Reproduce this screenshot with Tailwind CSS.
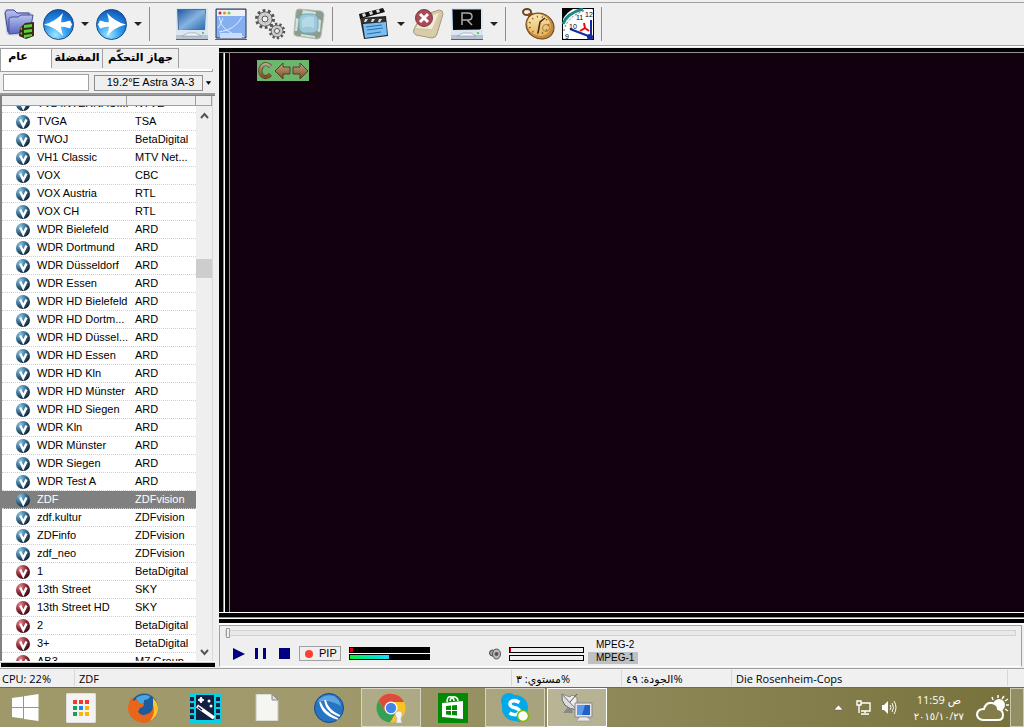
<!DOCTYPE html>
<html lang="ar">

<head>
    <meta charset="UTF-8" />
    <meta name="viewport" content="width=device-width, initial-scale=1.0" />
    <title>ZDF</title>
    <script src="https://cdn.jsdelivr.net/npm/@tailwindcss/browser@4"></script>
</head>

<body class="h-screen flex flex-col overflow-hidden bg-[#efefef] text-black font-['Liberation_Sans','DejaVu_Sans',sans-serif]">
    <!-- shared gradients and symbols -->
    <svg class="absolute w-0 h-0" aria-hidden="true">
        <defs>
            <radialGradient id="ball" cx=".4" cy=".85" r=".9"><stop offset="0" stop-color="#9fe6ff" /><stop offset=".45" stop-color="#2f9cf0" /><stop offset="1" stop-color="#0b4fae" /></radialGradient>
            <linearGradient id="folder" x2="0" y2="1"><stop offset="0" stop-color="#b9c2ee" /><stop offset="1" stop-color="#5a67c4" /></linearGradient>
            <linearGradient id="screen" x2="1" y2="1"><stop offset="0" stop-color="#2459a0" /><stop offset=".5" stop-color="#86b4e0" /><stop offset="1" stop-color="#2a68b0" /></linearGradient>
            <linearGradient id="gold" x2="1" y2="1"><stop offset="0" stop-color="#fff2c0" /><stop offset="1" stop-color="#e2a94c" /></linearGradient>
            <linearGradient id="bronze" x2="0" y2="1"><stop offset="0" stop-color="#b5a58c" /><stop offset="1" stop-color="#8b4a1c" /></linearGradient>
            <radialGradient id="vblue" cx=".3" cy=".25" r=".8"><stop offset="0" stop-color="#8cc4e0" /><stop offset=".5" stop-color="#3a7498" /><stop offset="1" stop-color="#0c1f30" /></radialGradient>
            <radialGradient id="vred" cx=".3" cy=".25" r=".8"><stop offset="0" stop-color="#e08a90" /><stop offset=".5" stop-color="#98303c" /><stop offset="1" stop-color="#2c0a10" /></radialGradient>
            <symbol id="chan-blue" viewBox="0 0 14 14"><circle cx="7" cy="7" r="7" fill="url(#vblue)" /><path d="M4.200 4.500 7.300 11 10.500 4.500" fill="none" stroke="#fff" stroke-width="2.400" /></symbol>
            <symbol id="chan-red" viewBox="0 0 14 14"><circle cx="7" cy="7" r="7" fill="url(#vred)" /><path d="M4.200 4.500 7.300 11 10.500 4.500" fill="none" stroke="#fff" stroke-width="2.400" /></symbol>
            <symbol id="monitor" viewBox="0 0 32 32">
                <path d="M0 25h32v6H0z" fill="#b9c3cf" /><path d="M0 31h32v1H0z" fill="#a03880" />
                <path d="M0 0h32v27H0z" fill="#dce6f0" /><path d="M1 1h29l-1 21H2z" fill="#4d6f96" />
                <path d="M2 2h27v19L3 22z" fill="url(#screen)" />
                <path d="m12 25 8 0 5 3H6z" fill="#f4f7fa" stroke="#8294a8" stroke-width=".6" /><circle cx="27" cy="25" r="1" fill="#35c040" />
            </symbol>
        </defs>
    </svg>

    <header class="shrink-0 pt-[2px] border-b border-white">
        <nav class="flex items-center h-[44px] pl-[3px] gap-[7px] border-y border-[#a0a0a0]">
            <button aria-label="Open list">
                <svg class="w-[33px] h-8" viewBox="0 0 33 32">
                    <path d="M1 3q1-3 4-2l6 1 2 2h13q3 0 3 3l1 17q-13 5-24 3-3 0-3-4z" fill="#cfcfd8" />
                    <path d="m2 5 2-3h7l3 3h12v19H5z" fill="url(#folder)" stroke="#3c4694" />
                    <path d="M6 11q0-2 3-2h6l3-2h12l-3 17-21 2z" fill="url(#folder)" stroke="#4450a4" />
                    <path d="m17 20 5-5 9-1v14l-8 3-7-3z" fill="#3a2b14" />
                    <path d="m21 17 8-1v3l-8 1zm0 5 8-1v3l-8 1zm0 5 8-1v2l-8 2z" fill="#58d040" />
                    <path d="m17 21 2-2v3zm0 4 2-1v3z" fill="#e0a030" />
                </svg>
            </button>
            <button aria-label="Back">
                <svg class="w-[31px] h-[31px]" viewBox="0 0 31 31">
                    <circle cx="15.500" cy="15.500" r="15" fill="url(#ball)" stroke="#174c8c" />
                    <path d="M1 15.500Q12 13 20 4q-4 11.500 0 23Q12 18 1 15.500z" fill="#fff" />
                    <path d="M16 13.500q6 0 11-2l2 4-2 4q-5-2-11-2z" fill="#fff" />
                </svg>
            </button>
            <button aria-label="Back history"><svg class="w-2 h-2" viewBox="0 0 8 8"><path d="M0 2h8L4 6z" fill="#222" /></svg></button>
            <button aria-label="Forward">
                <svg class="w-[31px] h-[31px]" viewBox="0 0 31 31">
                    <circle cx="15.500" cy="15.500" r="15" fill="url(#ball)" stroke="#174c8c" />
                    <path d="M30 15.500Q19 13 11 4q4 11.500 0 23 8-9 19-11.500z" fill="#fff" />
                    <path d="M15 13.500q-6 0-11-2l-2 4 2 4q5-2 11-2z" fill="#fff" />
                </svg>
            </button>
            <button aria-label="Forward history"><svg class="w-2 h-2" viewBox="0 0 8 8"><path d="M0 2h8L4 6z" fill="#222" /></svg></button>
            <span class="w-px h-[34px] bg-[#8c8c8c]"></span>
            <button class="ml-[19px]" aria-label="Display"><svg class="w-8 h-8"><use href="#monitor" /></svg></button>
            <button aria-label="Window">
                <svg class="w-8 h-8" viewBox="0 0 32 32">
                    <path d="M0 31h32v1H0z" fill="#a03880" /><path d="M1 1h30v29H1z" fill="#86aff0" stroke="#23355f" />
                    <path d="M2 2h28v6H2z" fill="#eef0f4" />
                    <circle cx="5" cy="5" r="1.500" fill="#d22" /><circle cx="9.500" cy="5" r="1.500" fill="#e88a20" /><circle cx="14" cy="5" r="1.500" fill="#7c3" />
                    <path d="M4 9q2 16 25 20M4 24Q20 22 27 9M8 10q-2 6-5 10" fill="none" stroke="#dceaff" />
                    <path d="M5 25h22v5H5z" fill="#c9dcff" />
                </svg>
            </button>
            <button aria-label="Settings">
                <svg class="w-8 h-8" viewBox="0 0 32 32" fill="none">
                    <circle cx="11" cy="11" r="8.500" stroke="#555" stroke-width="3" stroke-dasharray="2.800 2.540" />
                    <circle cx="11" cy="11" r="6" fill="#d5d5d5" stroke="#555" stroke-width="3" /><circle cx="11" cy="11" r="5.500" stroke="#d0d0d0" stroke-width="2.500" /><circle cx="11" cy="11" r="3" fill="#eee" stroke="#555" />
                    <circle cx="23" cy="23" r="7" stroke="#555" stroke-width="2.500" stroke-dasharray="2.300 2.100" />
                    <circle cx="23" cy="23" r="5" fill="#d5d5d5" stroke="#555" stroke-width="2.500" /><circle cx="23" cy="23" r="4.500" stroke="#d0d0d0" stroke-width="2" /><circle cx="23" cy="23" r="2.500" fill="#eee" stroke="#555" />
                </svg>
            </button>
            <button aria-label="Fullscreen">
                <svg class="w-8 h-8" viewBox="0 0 32 32">
                    <path d="m6 1 22 2q3 1 3 4l-3 21q-1 3-4 3L3 28q-3-1-2-4L3 4q0-3 3-3z" fill="#8d9d8c" stroke="#b4beb2" />
                    <path d="m10 2 13 2-1 4-13-2zM3 10l3 1-2 12H2zm25 2-1 12-3-1 1-12zM8 26l14 2v2L8 28z" fill="#cfe4e0" />
                    <rect x="6" y="6" width="19" height="19" rx="6" fill="#9cc8d8" stroke="#7ba8ba" /><path d="M9 12q4-5 12-3v11q-7-3-12 0z" fill="#b4dae8" />
                </svg>
            </button>
            <span class="w-px h-[34px] bg-[#8c8c8c]"></span>
            <button class="ml-[18px]" aria-label="Record">
                <svg class="w-8 h-8" viewBox="0 0 32 32">
                    <path d="m2 10 26-2 2 20-24 3z" fill="#222" />
                    <path d="m1 6 24-6 2 4L2 11z" fill="#111" /><path d="m4 6 3-1 1 3-3 1zm7-2 3-1 1 3-3 1zm7-2 3-1 1 3-3 1z" fill="#ddd" />
                    <path d="m3 10 24 0 0 4-24 1z" fill="#333" /><path d="m7 11 3 0-2 3-2 0zm7 0h3l-2 3h-2zm7 0h3l-2 3h-2z" fill="#ddd" />
                    <path d="m5 16 23-2 1 13-22 3z" fill="#79bdf3" /><path d="m8 19 16-2M9 22l16-2M9 26l14-2" stroke="#2a6dab" />
                </svg>
            </button>
            <button aria-label="Record options"><svg class="w-2 h-2" viewBox="0 0 8 8"><path d="M0 2h8L4 6z" fill="#222" /></svg></button>
            <button aria-label="Delete">
                <svg class="w-8 h-8" viewBox="0 0 32 32">
                    <path d="m9 8 18-6q4 0 4 4l-6 20q-1 4-5 4L4 27q-4-2-2-6z" fill="#d5c9a8" stroke="#a9987a" />
                    <path d="m10 11 17-6-7 16-16-1z" fill="#f1ead6" /><path d="m3 22 16 2 9-17-5 20-4 2-14-3z" fill="#d9cca8" />
                    <circle cx="12" cy="10" r="8.500" fill="#a94a55" stroke="#7f3a44" /><path d="m8 6 8 8m0-8-8 8" stroke="#fff" stroke-width="3" />
                </svg>
            </button>
            <button aria-label="Radio">
                <svg class="w-8 h-8" viewBox="0 0 32 32">
                    <use href="#monitor" /><path d="M2 2h28v19L2 22z" fill="#050505" />
                    <path d="M11 17V5h6q4 0 4 3.500T17 12h-6m5 0 5 5" fill="none" stroke="#aaa" stroke-width="1.500" />
                </svg>
            </button>
            <button aria-label="Radio options"><svg class="w-2 h-2" viewBox="0 0 8 8"><path d="M0 2h8L4 6z" fill="#222" /></svg></button>
            <span class="w-px h-[34px] bg-[#8c8c8c]"></span>
            <button class="ml-[9px]" aria-label="Timer">
                <svg class="w-[33px] h-8" viewBox="0 0 33 32">
                    <ellipse cx="5" cy="4" rx="4" ry="3" fill="none" stroke="#6b431c" stroke-width="2" /><path d="m5 6 5-2 2 4-5 3z" fill="#845724" />
                    <ellipse cx="18" cy="18" rx="14.500" ry="12.500" transform="rotate(30 18 18)" fill="#c48b3c" stroke="#6b431c" />
                    <ellipse cx="17" cy="17" rx="12" ry="10.500" transform="rotate(30 17 17)" fill="url(#gold)" />
                    <ellipse cx="17" cy="17" rx="9.500" ry="8.500" fill="none" stroke="#7c5a28" stroke-dasharray="1 4" stroke-width="2" />
                    <circle cx="24" cy="20" r="3.500" fill="none" stroke="#a88040" /><path d="m16 25 2-11 5-4" fill="none" stroke="#3b2810" stroke-width="1.500" />
                </svg>
            </button>
            <button aria-label="Schedule">
                <svg class="w-8 h-8" viewBox="0 0 32 32">
                    <rect width="32" height="32" rx="2" fill="#fff" stroke="#000" stroke-width="2" /><path d="M0 0h13Q4 4 0 13z" />
                    <path d="M1 16Q5 5 21 1" fill="none" stroke="#168b86" stroke-width="3" /><path d="M2 23Q4 9 24 2" fill="none" stroke="#666" stroke-dasharray="2 2" />
                    <path d="M29 29V12m0 17L8 21" fill="none" stroke="#1428a0" stroke-width="2" /><circle cx="28" cy="29" r="3" fill="#1428a0" />
                    <path d="m22 15 1 5-5 3m5-3 4 3" fill="none" stroke="#e01010" stroke-width="2" />
                    <g font-size="7" font-family="Liberation Sans"><text x="14" y="12">11</text><text x="23" y="9">12</text><text x="7" y="21">10</text><text x="3" y="31">9</text></g>
                </svg>
            </button>
            <span class="w-px h-[34px] bg-[#8c8c8c]"></span>
        </nav>
    </header>

    <main class="flex flex-1 min-h-0">
        <aside class="w-[215px] shrink-0 flex flex-col">
            <div class="flex h-[21px] mt-px text-[11px] font-bold font-['DejaVu_Sans',sans-serif]" dir="ltr">
                <button class="w-[51px] pr-4 pb-1 bg-white border-t border-l border-[#a0a0a0]">عام</button>
                <button class="w-[52px] h-5 border border-b-0 border-[#a0a0a0]">المفضلة</button>
                <button class="w-[76px] h-5 border border-[#a0a0a0] border-b-0 border-l-0 whitespace-nowrap">جهاز التحكّم</button>
            </div>
            <div class="h-[3px] mr-[2px] bg-white border border-[#a0a0a0] border-t-0"></div>
            <div class="flex items-center h-[23px] pl-[3px] border-b-2 border-[#9a9a9a]">
                <input type="text" aria-label="Search" class="w-[86px] h-[17px] px-1 bg-white border border-[#a0a0a0] text-[11px] outline-none" />
                <select aria-label="Satellite" class="appearance-none w-[109px] h-4 ml-[5px] pl-1 bg-[#efefef] border border-[#8c8c8c] text-[11px] leading-none text-center">
                    <option>19.2°E Astra 3A-3</option>
                </select>
                <svg class="w-[7px] h-2 ml-[2px]" viewBox="0 0 8 8"><path d="M1 2h6L4 6z" /></svg>
            </div>
            <div class="flex flex-1 min-h-0 border-l-2 border-t border-[#808080] bg-white">
                <table class="flex flex-1 min-w-0 flex-col text-[11px]">
                    <thead class="block shrink-0">
                        <tr class="flex h-[10px] bg-[#efefef] border-b border-[#a0a0a0]">
                            <th class="w-[125px] border-r border-[#a0a0a0]" aria-label="Channel"></th>
                            <th class="flex-1 border-r border-[#a0a0a0]" aria-label="Provider"></th>
                        </tr>
                    </thead>
                    <tbody id="channels" class="block flex-1 min-h-0 overflow-hidden"></tbody>
                </table>
                <div class="w-4 flex flex-col items-center bg-[#efefef]">
                    <div class="w-full h-[10px] border-b border-r border-[#a0a0a0]"></div>
                    <svg class="w-[9px] h-[7px] mt-[6px]" viewBox="0 0 9 7"><path d="m1 6 3.500-4L8 6" fill="none" stroke="#555" stroke-width="2" /></svg>
                    <div class="flex-1"></div>
                    <div class="w-4 h-[19px] bg-[#cdcdcd]"></div>
                    <div class="flex-[2.65]"></div>
                    <svg class="w-[9px] h-[7px] mb-[5px]" viewBox="0 0 9 7"><path d="m1 1 3.500 4L8 1" fill="none" stroke="#555" stroke-width="2" /></svg>
                </div>
                <div class="w-[3px] bg-[#efefef] border-l border-[#d8d8d8]"></div>
            </div>
            <div class="h-[2px] bg-white border-b border-[#c8c8c8]"></div>
            <div class="h-1 ml-px bg-black"></div>
            <div class="h-px"></div>
        </aside>

        <section class="flex flex-col flex-1 min-w-0 ml-1">
            <!-- video area, framed by the black bars -->
            <div class="flex flex-col flex-1 mt-px pt-1 bg-black">
                <div class="flex flex-1 pl-1 border-t border-[#909090]">
                    <div class="w-[2px] bg-white border-l border-[#909090]"></div>
                    <div class="w-1"></div>
                    <div class="flex-1 bg-[#12000f] border-l border-[#909090] pl-[27px] pt-[7px]">
                        <div class="flex w-[52px] h-[21px] bg-[#6eb56e]">
                            <button aria-label="Clear"><svg class="w-[17px] h-[21px]" viewBox="0 0 17 21"><path d="M13.500 6.500Q9 2 5 6q-3.500 5 0 9.500 4 3.500 8.500-1" fill="none" stroke="#4f4424" stroke-width="4" /><path d="M13.500 6.500Q9 2 5 6q-3.500 5 0 9.500 4 3.500 8.500-1" fill="none" stroke="url(#bronze)" stroke-width="2.500" /></svg></button>
                            <button aria-label="Previous"><svg class="w-[17px] h-[21px]" viewBox="0 0 17 21"><path d="m1 11 8-8v4h7v7H9v5z" fill="url(#bronze)" stroke="#4b4524" /></svg></button>
                            <button aria-label="Next"><svg class="w-[17px] h-[21px]" viewBox="0 0 17 21"><path d="m17 11-8-8v4H2v7h7v5z" fill="url(#bronze)" stroke="#4b4524" /></svg></button>
                        </div>
                    </div>
                </div>
            </div>
            <div class="h-px bg-white"></div>
            <div class="h-1 bg-black"></div>
            <div class="h-[2px] bg-white border-t border-[#909090]"></div>
            <div class="h-1 bg-black"></div>
            <div class="h-[2px] bg-white"></div>
            <div class="h-[42px] mb-px mr-[2px] border border-[#a0a0a0] border-b-white">
                <input type="range" min="0" max="100" value="0" aria-label="Position"
                    class="block appearance-none h-[10px] mt-[2px] mx-[5px] w-[calc(100%-10px)] bg-transparent [&::-webkit-slider-runnable-track]:h-[6px] [&::-webkit-slider-runnable-track]:border [&::-webkit-slider-runnable-track]:border-[#d2d2d2] [&::-webkit-slider-runnable-track]:bg-[#e6eaea] [&::-webkit-slider-thumb]:appearance-none [&::-webkit-slider-thumb]:w-1 [&::-webkit-slider-thumb]:h-[10px] [&::-webkit-slider-thumb]:-mt-[3px] [&::-webkit-slider-thumb]:border [&::-webkit-slider-thumb]:border-[#a0a0a0] [&::-webkit-slider-thumb]:bg-[#efefef]" />
                <div class="flex items-center h-7 pt-[3px] pl-[13px]">
                    <button aria-label="Play"><svg class="w-3 h-3" viewBox="0 0 12 12"><path d="M0 0v12l12-6z" fill="#000080" /></svg></button>
                    <button aria-label="Pause" class="ml-[10px]"><svg class="w-3 h-[11px]" viewBox="0 0 12 11"><path d="M0 0h3v11H0zm8 0h3v11H8z" fill="#000080" /></svg></button>
                    <button aria-label="Stop" class="ml-3 w-[11px] h-[11px] bg-[#000080]"></button>
                    <button class="flex items-center ml-[9px] w-[42px] h-[15px] pl-[5px] gap-[6px] border border-[#a0a0a0] text-[11px]"><span class="w-2 h-2 rounded-full bg-[#ff4030]"></span>PIP</button>
                    <div class="w-[81px] ml-2 bg-black">
                        <div class="h-[6px] py-px pl-px"><div class="w-[3px] h-1 bg-red-600"></div></div>
                        <div class="h-px bg-white"></div>
                        <div class="h-[6px] py-px pl-px"><div class="w-[39px] h-1 bg-linear-to-r from-[#10f010] to-[#20d8ff]"></div></div>
                    </div>
                    <button aria-label="Mute" class="ml-[59px]">
                        <svg class="w-3 h-3" viewBox="0 0 12 12"><circle cx="3.500" cy="5" r="3" fill="#9aa3b5" stroke="#444" /><ellipse cx="7.500" cy="6" rx="4" ry="5" fill="#bbb" stroke="#555" /><circle cx="7.500" cy="6" r="2" fill="#555" /></svg>
                    </button>
                    <div class="flex flex-col gap-[2px] w-[75px] ml-[8px]">
                        <div class="h-[6px] border border-black"><div class="w-px h-1 bg-red-600"></div></div>
                        <div class="h-[6px] border border-black"></div>
                    </div>
                    <div class="ml-1 -mt-1 text-[10px] leading-[12px]">
                        <div class="pl-2 mb-px">MPEG-2</div>
                        <div class="w-[50px] pl-2 bg-[#c0c0c0]">MPEG-1</div>
                    </div>
                </div>
            </div>
        </section>
    </main>

    <footer class="flex shrink-0 h-[19px] pt-px pb-px border-t border-[#a0a0a0] bg-[#f0f0f0] text-[11px] leading-[17px] whitespace-nowrap font-['Open_Sans','DejaVu_Sans',sans-serif]">
        <div class="w-[75px] pl-[2px] border-r border-[#d7d7d7]">CPU: 22%</div>
        <div class="flex-1 pl-1 border-r border-[#d7d7d7]">ZDF</div>
        <div class="w-[110px] pl-1 border-r border-[#d7d7d7]"><bdi dir="rtl">%مستوي: ٣</bdi></div>
        <div class="w-[110px] pl-1 border-r border-[#d7d7d7]"><bdi dir="rtl">%الجودة: ٤٩</bdi></div>
        <div class="w-[276px] pl-1 border-r border-[#d7d7d7]">Die Rosenheim-Cops</div>
        <div class="w-4"></div>
    </footer>

    <div class="flex shrink-0 h-10 border-t border-[#6e6a4a] bg-linear-to-r from-[#9f9869] via-[#a09a6e] via-30% to-[#77723c] text-white">
        <button aria-label="Start" class="w-[50px] flex justify-center items-center">
            <svg class="w-7 h-7" viewBox="0 0 28 28"><path d="m1 4 11-1.500V13H1zm12-1.700L27.500 0v13H13zM1 14h11v10.500L1 23zm12 0h14.500v13L13 25z" fill="#fff" /></svg>
        </button>
        <button aria-label="Apps" class="w-[62px] flex justify-center items-center">
            <svg class="w-[30px] h-[30px]" viewBox="0 0 30 30">
                <rect width="30" height="30" rx="2" fill="#f3f3f3" stroke="#ccc" />
                <path d="M7 7h4v4H7zm6 0h4v4h-4zm6 0h4v4h-4z" fill="#f03a2e" /><path d="M7 13h4v4H7zm0 6h4v4H7z" fill="#16a05a" />
                <path d="M13 13h4v4h-4z" fill="#1a85e8" /><path d="M13 19h4v4h-4zm6-6h4v4h-4zm0 6h4v4h-4z" fill="#fbb400" />
            </svg>
        </button>
        <button aria-label="Firefox" class="w-[62px] flex justify-center items-center">
            <svg class="w-[30px] h-[30px]" viewBox="0 0 30 30">
                <circle cx="16" cy="14" r="13.500" fill="#1d5b9c" /><path d="M8 5q6-5 14-2-1 4-6 4 1 5-5 5z" fill="#4aa7dc" />
                <path d="M25 5q5 5 5 11-1 12-14 14Q3 29 0 17 0 9 4 4l1 4 4-2q0 3 3 4l4 1q0 3-4 4l-2 4q4 5 9 2 6-1 6-9 1-4 0-7z" fill="#e8651b" />
                <path d="M25 5q5 5 5 11-1 8-8 12 6-8 3-16z" fill="#fbc531" />
            </svg>
        </button>
        <button aria-label="Movie Maker" class="w-[62px] flex justify-center items-center">
            <svg class="w-8 h-[30px]" viewBox="0 0 32 30">
                <path d="M0 0h32v30H0z" fill="#08d0e4" /><path d="M7 2h18v25H7z" fill="#111f42" />
                <path d="M1 4h4v4H1zm0 6h4v4H1zm0 6h4v4H1zm0 6h4v4H1zM27 4h4v4h-4zm0 6h4v4h-4zm0 6h4v4h-4zm0 6h4v4h-4z" fill="#111f42" />
                <path d="m8 13 17 12" stroke="#fff" stroke-width="3.500" /><path d="m9 14 4 3" stroke="#111f42" stroke-width="1.500" />
                <path d="m12 4 1 2 2 1-2 1-1 2-1-2-2-1 2-1z" fill="#fff" stroke="#fff" /><circle cx="20" cy="8" r="1.500" fill="#fff" /><circle cx="22" cy="13" r="1.500" fill="#fff" />
            </svg>
        </button>
        <button aria-label="Document" class="w-[62px] flex justify-center items-center">
            <svg class="w-6 h-[27px]" viewBox="0 0 24 27"><path d="M1 0h16l6 6v21H1z" fill="#f5f5f2" stroke="#c5c5bb" /><path d="M17 0v6h6z" fill="#ddd" stroke="#888" /></svg>
        </button>
        <button aria-label="JDownloader" class="w-[62px] flex justify-center items-center">
            <svg class="w-[30px] h-[30px]" viewBox="0 0 30 30"><circle cx="15" cy="15" r="14.500" fill="#2674c4" stroke="#174a88" /><path d="M3 9Q9 0 20 3q6 4 7 10-12-7-24-4z" fill="#5fa3e0" /><path d="M6 9q2 13 18 17-14-6-18-17zm5-2q1 12 15 16-12-5-15-16z" fill="#fff" stroke="#fff" stroke-width="1.500" /></svg>
        </button>
        <button aria-label="Chrome" class="w-[60px] mx-px flex justify-center items-center border border-white/50 bg-white/20">
            <svg class="w-[30px] h-[30px]" viewBox="0 0 30 30">
                <circle cx="15" cy="15" r="14.500" fill="#f7c325" /><path d="M2.500 7.500A14.500 14.500 0 0 0 14 29.500L20 19l-11-1z" fill="#35a055" /><path d="M2.500 7.500 9 18l6-9 13 0A14.500 14.500 0 0 0 2.500 7.500z" fill="#dd4b3c" />
                <circle cx="15" cy="15" r="6.500" fill="#fff" /><circle cx="15" cy="15" r="5.200" fill="#4285ea" />
                <path d="M19 21q0-3 4-3t3 4l-1 4 1 4h-6l1-4z" fill="#f4f4f4" stroke="#aaa" stroke-width=".6" />
            </svg>
        </button>
        <button aria-label="Store" class="w-[62px] flex justify-center items-center">
            <svg class="w-[30px] h-[30px]" viewBox="0 0 30 30"><path d="M0 0h30v30H0z" fill="#038a05" /><path d="m4 10 21-2v18L4 24z" fill="#fff" /><path d="M9 9q0-6 4-5 3 1 3 4m-4 0q1-5 5-4 3 1 3 4" fill="none" stroke="#fff" stroke-width="1.500" /><path d="m8 13 5-.5V17H8zm6-.6 5-.5V17h-5zM8 18h5v4l-5-.5zm6 0h5v4.600l-5-.5z" fill="#038a05" /></svg>
        </button>
        <button aria-label="Skype" class="w-[60px] mx-px flex justify-center items-center border border-white/50 bg-white/20">
            <svg class="w-[30px] h-[30px]" viewBox="0 0 30 30"><circle cx="9" cy="8" r="8" fill="#00a9e8" /><circle cx="20" cy="21" r="8" fill="#00a9e8" /><circle cx="15" cy="15" r="13" fill="#00a9e8" /><path d="M19.500 9.500Q14 6 10.500 9q-2 4 3.500 5.500 7 1.500 5 5.500-4 3.500-9.500 0" fill="none" stroke="#fff" stroke-width="3.500" /><circle cx="23" cy="23" r="5.500" fill="#fff" stroke="#7fba00" stroke-width="1.500" /></svg>
        </button>
        <button aria-label="TV viewer" class="w-[60px] mx-px flex justify-center items-center border border-white bg-white/35">
            <svg class="w-8 h-[30px]" viewBox="0 0 32 30">
                <path d="M1 1q-2 14 15 16z" fill="#ddd" stroke="#666" /><path d="m1 1 15 16 0-12q-5-5-7-1z" fill="#eee" stroke="#888" /><path d="m9 9 7-8" stroke="#555" /><path d="m7 14-5 6h10l-1-4z" fill="#888" />
                <path d="M14 10h17v14H14z" fill="#e6e6ea" stroke="#888" /><path d="M16 12h13v10H16z" fill="#1e62c8" /><path d="M16 12h8l-3 10h-5z" fill="#5d9aea" /><path d="M19 24h7l4 4H15z" fill="#e8e8ec" stroke="#999" stroke-width=".7" />
            </svg>
        </button>
        <div class="flex-1"></div>
        <div class="flex items-center gap-[11px] mr-[17px]">
            <svg class="w-[9px] h-[6px]" viewBox="0 0 9 6"><path d="M0 5 4.500 0 9 5z" fill="#fff" stroke="#555" stroke-width=".5" /></svg>
            <svg class="w-[15px] h-[15px] ml-[2px]" viewBox="0 0 15 15" fill="none" stroke="#fff" stroke-width="1.400"><path d="M5 3h9v8H5M9 11v2m-4 1h8M1 1h4v4H1zM3 5v8" /></svg>
            <svg class="w-[15px] h-[15px]" viewBox="0 0 15 15"><path d="M0 5h2l4-4v13l-4-4H0z" fill="#fff" /><path d="M8 5q2 2.500 0 5m2-7q3 4.500 0 9m2-11q4 6.500 0 13" fill="none" stroke="#fff" /></svg>
        </div>
        <div class="flex flex-col justify-center mr-3 text-[11px] leading-[17px] text-center whitespace-nowrap font-['Open_Sans','DejaVu_Sans',sans-serif]">
            <div dir="ltr">11:59 ص</div>
            <div dir="ltr" class="text-[10px]"><bdo dir="ltr">٢٠١٥/١٠/٢٧</bdo></div>
        </div>
        <div class="flex items-center">
            <svg class="w-[34px] h-7" viewBox="0 0 34 28"><circle cx="23" cy="11" r="6" fill="#fff" /><path d="M22 1v3m6-2-2 3m6 0-3 2m4 4h-3m2 6-3-2M16 3l1 3" stroke="#fff" stroke-width="1.500" /><path d="M8 26q-6 0-7-5 0-6 7-6 2-7 8-6 6 1 6 6 5 1 5 6t-5 5z" fill="#827c4a" stroke="#fff" stroke-width="2" /></svg>
        </div>
        <button aria-label="Show desktop" class="w-[14px] border border-white/50 bg-white/20"></button>
    </div>

    <script>
        const channelsBody = document.querySelector("#channels");

        const channels = [
            ["TV2 INTERNACI...", "NTVE"],
            ["TVGA", "TSA"],
            ["TWOJ", "BetaDigital"],
            ["VH1 Classic", "MTV Net..."],
            ["VOX", "CBC"],
            ["VOX Austria", "RTL"],
            ["VOX CH", "RTL"],
            ["WDR Bielefeld", "ARD"],
            ["WDR Dortmund", "ARD"],
            ["WDR Düsseldorf", "ARD"],
            ["WDR Essen", "ARD"],
            ["WDR HD Bielefeld", "ARD"],
            ["WDR HD Dortm...", "ARD"],
            ["WDR HD Düssel...", "ARD"],
            ["WDR HD Essen", "ARD"],
            ["WDR HD Kln", "ARD"],
            ["WDR HD Münster", "ARD"],
            ["WDR HD Siegen", "ARD"],
            ["WDR Kln", "ARD"],
            ["WDR Münster", "ARD"],
            ["WDR Siegen", "ARD"],
            ["WDR Test A", "ARD"],
            ["ZDF", "ZDFvision"],
            ["zdf.kultur", "ZDFvision"],
            ["ZDFinfo", "ZDFvision"],
            ["zdf_neo", "ZDFvision"],
            ["1", "BetaDigital", true],
            ["13th Street", "SKY", true],
            ["13th Street HD", "SKY", true],
            ["2", "BetaDigital", true],
            ["3+", "BetaDigital", true],
            ["AB3", "M7 Group", true],
        ];

        channels.forEach(([name, provider, locked]) => {
            const color = name === "ZDF" ? "bg-[#808080] text-white" : "";
            channelsBody.innerHTML += `
            <tr class="flex h-[18px] border-b border-dotted border-[#d0d0d0] leading-[17px] whitespace-nowrap first:-mt-[11px] ${color}">
                <td class="flex items-center shrink-0 w-[133px] pl-[14px]"><svg class="shrink-0 w-[14px] h-[14px] mr-[7px]"><use href="#${locked ? "chan-red" : "chan-blue"}" /></svg>${name}</td>
                <td>${provider}</td>
            </tr>`;
        });
    </script>
</body>

</html>
